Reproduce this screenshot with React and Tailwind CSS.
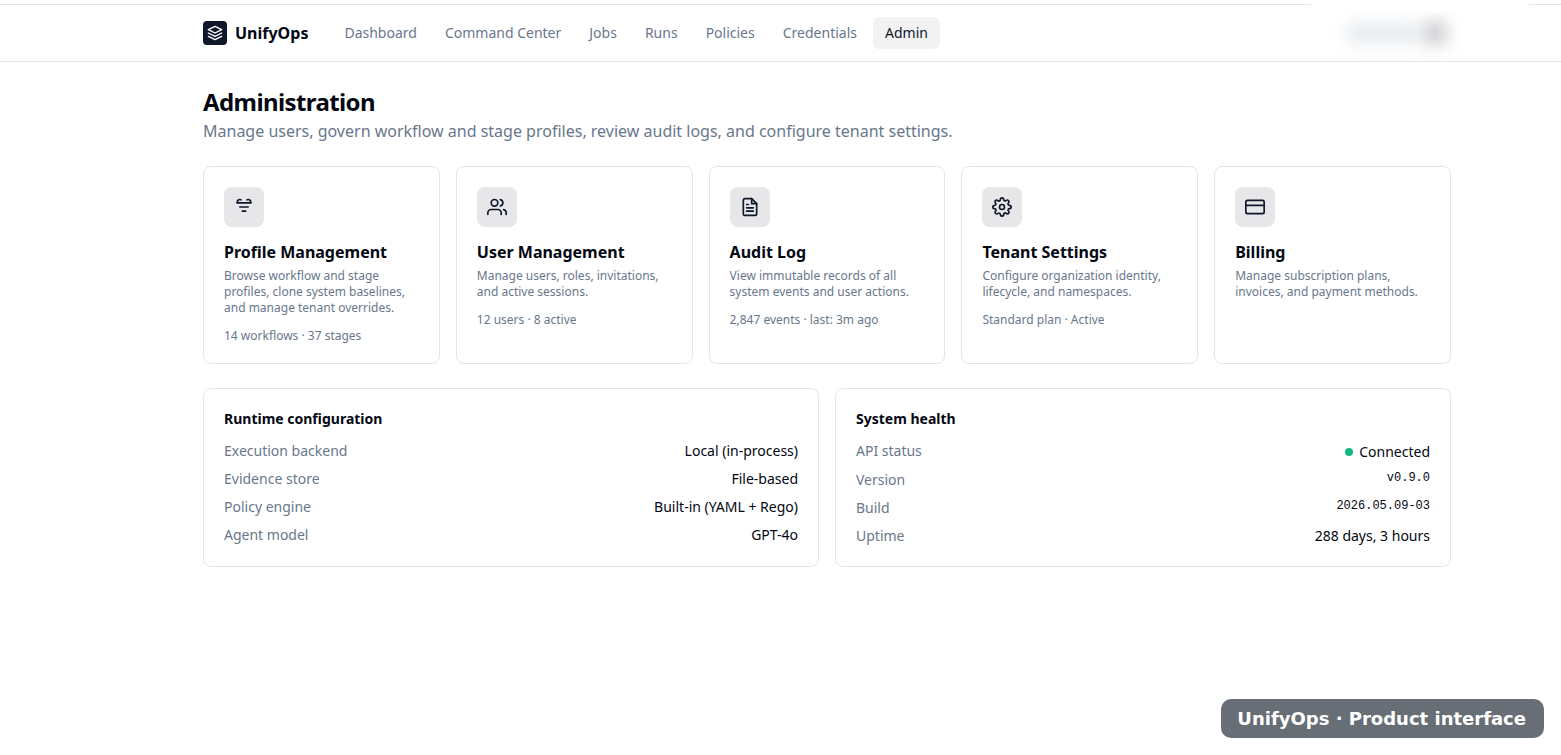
import { FiUsers, FiFileText, FiSettings, FiCreditCard } from 'react-icons/fi';

const navItems = ['Dashboard', 'Command Center', 'Jobs', 'Runs', 'Policies', 'Credentials', 'Admin'];

const LogoIcon = () => (
  <svg viewBox="0 0 24 24" className="w-4 h-4" fill="none" stroke="currentColor" strokeWidth="2" strokeLinecap="round" strokeLinejoin="round">
    <path d="M12 2 2 7l10 5 10-5-10-5z" />
    <path d="m2 12 10 5 10-5" />
    <path d="m2 17 10 5 10-5" />
  </svg>
);

const ProfileIcon = () => (
  <svg viewBox="0 0 24 24" className="w-5 h-5" fill="none" stroke="currentColor" strokeWidth="2" strokeLinecap="round" strokeLinejoin="round">
    <path d="M3.5 7h17" />
    <path d="M7 12h10" />
    <path d="M10 17h4" />
    <path d="M8.5 3.500C8 2.900 7.500 3 7 3a3 3 0 0 0-3 3.500" />
    <path d="M15.500 3.500C16 2.900 16.500 3 17 3a3 3 0 0 1 3 3.500" />
  </svg>
);

const sections = [
  {
    title: 'Profile Management',
    description: 'Browse workflow and stage profiles, clone system baselines, and manage tenant overrides.',
    meta: '14 workflows · 37 stages',
    icon: ProfileIcon,
  },
  {
    title: 'User Management',
    description: 'Manage users, roles, invitations, and active sessions.',
    meta: '12 users · 8 active',
    icon: FiUsers,
  },
  {
    title: 'Audit Log',
    description: 'View immutable records of all system events and user actions.',
    meta: '2,847 events · last: 3m ago',
    icon: FiFileText,
  },
  {
    title: 'Tenant Settings',
    description: 'Configure organization identity, lifecycle, and namespaces.',
    meta: 'Standard plan · Active',
    icon: FiSettings,
  },
  {
    title: 'Billing',
    description: 'Manage subscription plans, invoices, and payment methods.',
    icon: FiCreditCard,
  },
];

const runtime = [
  { label: 'Execution backend', value: 'Local (in-process)' },
  { label: 'Evidence store', value: 'File-based' },
  { label: 'Policy engine', value: 'Built-in (YAML + Rego)' },
  { label: 'Agent model', value: 'GPT-4o' },
];

const health = [
  { label: 'API status', value: 'Connected', status: true },
  { label: 'Version', value: 'v0.9.0', mono: true },
  { label: 'Build', value: '2026.05.09-03', mono: true },
  { label: 'Uptime', value: '288 days, 3 hours' },
];

const InfoPanel = ({ title, rows }) => (
  <section className="rounded-lg border border-[#e5e5e7] p-5">
    <h2 className="text-sm font-bold">{title}</h2>
    <dl className="mt-3 space-y-2 text-sm">
      {rows.map((row) => (
        <div key={row.label} className="flex justify-between">
          <dt className="text-[#69778c]">{row.label}</dt>
          {row.status ? (
            <dd className="flex items-center gap-1.5 pt-px">
              <span className="w-2 h-2 rounded-full bg-[#10b981]"></span>
              {row.value}
            </dd>
          ) : (
            <dd className={row.mono ? "font-['Liberation_Mono',monospace] text-xs" : ''}>{row.value}</dd>
          )}
        </div>
      ))}
    </dl>
  </section>
);

const App = () => {
  return (
    <div className="relative min-h-screen bg-white pt-1 font-['Noto_Sans',sans-serif] text-gray-950">
      <header className="border-y border-[#e5e5e7]">
        <div className="flex h-14 items-center pl-[203px] pr-[110px]">
          <a href="#" className="flex items-center gap-2 font-bold">
            <span className="flex w-6 h-6 items-center justify-center rounded bg-slate-900 text-white">
              <LogoIcon />
            </span>
            UnifyOps
          </a>
          <nav className="ml-6 flex items-center gap-1">
            {navItems.map((item) => (
              <a
                key={item}
                href="#"
                className={`rounded-md px-3 py-1.5 text-sm ${
                  item === 'Admin' ? 'bg-[#f2f2f3] text-slate-900' : 'text-[#69778c]'
                }`}
              >
                {item}
              </a>
            ))}
          </nav>
          <div className="ml-auto flex items-center gap-1 pr-1" aria-hidden="true">
            <span className="h-5 w-18 bg-[#e6eaee] blur-[8px]"></span>
            <span className="h-6 w-6 rounded bg-[#cecfd3] blur-[8px]"></span>
          </div>
        </div>
      </header>
      <div className="absolute right-8 top-0 h-3 w-[218px] bg-white"></div>

      <main className="pl-[203px] pr-[110px] py-6">
        <h1 className="text-2xl font-bold tracking-tight">Administration</h1>
        <p className="mt-px text-[#69778c]">
          Manage users, govern workflow and stage profiles, review audit logs, and configure tenant settings.
        </p>

        <div className="mt-[23px] grid grid-cols-5 gap-4">
          {sections.map(({ title, description, meta, icon: Icon }) => (
            <a key={title} href="#" className="rounded-lg border border-[#e5e5e7] p-5 pb-[19px]">
              <span className="flex w-10 h-10 items-center justify-center rounded-lg bg-[#e7e7e9] text-slate-900">
                <Icon className="w-5 h-5" />
              </span>
              <h3 className="mt-[13px] font-bold">{title}</h3>
              <p className="mt-1 text-xs text-[#69778c]">{description}</p>
              {meta && <p className="mt-3 text-xs text-[#69778c]">{meta}</p>}
            </a>
          ))}
        </div>

        <div className="mt-6 grid grid-cols-2 gap-4">
          <InfoPanel title="Runtime configuration" rows={runtime} />
          <InfoPanel title="System health" rows={health} />
        </div>
      </main>

      <div className="fixed bottom-[17px] right-[17px] rounded-[10px] bg-[#686e76] py-1.5 pl-4 pr-[18px] font-['DejaVu_Sans',sans-serif] text-lg leading-[27px] font-bold text-white">
        UnifyOps · Product interface
      </div>
    </div>
  );
};

export default App;
